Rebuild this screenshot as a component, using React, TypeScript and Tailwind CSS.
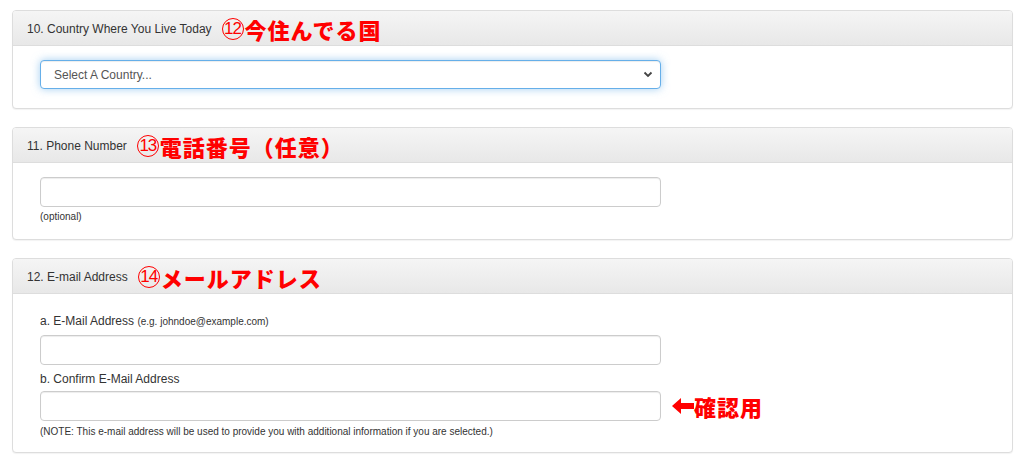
import React from "react";

const sans = "font-['Helvetica_Neue','Liberation_Sans',Arial,sans-serif]";
const jp = "font-['Noto_Sans_CJK_JP',sans-serif]";

function Circled({ n }: { n: string }) {
  return (
    <span className="inline-flex h-[22px] w-[22px] items-center justify-center rounded-full border border-[#ff0000] font-['Liberation_Sans_Narrow','Liberation_Sans',sans-serif] text-[17px] leading-none tracking-[-1px] text-[#ff0000]">
      {n}
    </span>
  );
}

function Panel({
  title,
  num,
  note,
  children,
}: {
  title: string;
  num: string;
  note: string;
  children: React.ReactNode;
}) {
  return (
    <div className="mx-[12px] mr-[11px] rounded-[4px] border border-[#dddddd] bg-white shadow-[0_1px_1px_rgba(0,0,0,0.05)] overflow-hidden">
      <div className="flex h-[35px] items-center border-b border-[#dddddd] bg-gradient-to-b from-[#f5f5f5] to-[#e8e8e8] px-[14px] pt-[1px]">
        <span className="text-[12px] text-[#333333]">{title}</span>
        <span className="ml-[10px] flex items-center">
          <Circled n={num} />
          <span className={`${jp} ml-[1px] text-[22px] font-black leading-none tracking-[1px] text-[#ff0000]`}>
            {note}
          </span>
        </span>
      </div>
      {children}
    </div>
  );
}

function TextInput() {
  return (
    <div className="h-[30px] w-[621px] rounded-[4px] border border-[#cccccc] bg-white shadow-[inset_0_1px_1px_rgba(0,0,0,0.075)]" />
  );
}

export default function App() {
  return (
    <div className={`${sans} h-[463px] w-[1024px] overflow-hidden bg-white pt-[10px] text-[#333333]`}>
      <Panel title="10. Country Where You Live Today" num="12" note="今住んでる国">
        <div className="px-[27px] pt-[14px] pb-[19px]">
          <div className="flex h-[29px] w-[621px] items-center justify-between rounded-[4px] border border-[#66afe9] bg-white pl-[13px] pr-[7px] text-[12px] text-[#555555] shadow-[inset_0_1px_1px_rgba(0,0,0,0.075),0_0_8px_rgba(102,175,233,0.6)]">
            <span>Select A Country...</span>
            <svg width="10" height="7" viewBox="0 0 10 7">
              <path d="M1.5 1.5 L5 5 L8.5 1.5" fill="none" stroke="#444" strokeWidth="1.8" />
            </svg>
          </div>
        </div>
      </Panel>

      <div className="h-[18px]" />

      <Panel title="11. Phone Number" num="13" note="電話番号（任意）">
        <div className="px-[27px] pt-[14px] pb-[15px]">
          <TextInput />
          <div className="mt-[3px] text-[10px] leading-[14px] text-[#333333]">(optional)</div>
        </div>
      </Panel>

      <div className="h-[18px]" />

      <Panel title="12. E-mail Address" num="14" note="メールアドレス">
        <div className="px-[27px] pt-[19px] pb-[13px]">
          <div className="mb-[5px] text-[12px] leading-[16px]">
            a. E-Mail Address <span className="text-[10px]">(e.g. johndoe@example.com)</span>
          </div>
          <TextInput />
          <div className="mt-[6px] mb-[4px] text-[12px] leading-[16px]">b. Confirm E-Mail Address</div>
          <div className="flex items-center">
            <TextInput />
            <div className="ml-[11px] flex items-center">
              <svg width="22" height="16" viewBox="0 0 22 16">
                <path d="M0 8 L9 0 L9 5 L22 5 L22 11 L9 11 L9 16 Z" fill="#ff0000" />
              </svg>
              <span className={`${jp} text-[22px] font-black leading-none tracking-[1px] text-[#ff0000]`}>確認用</span>
            </div>
          </div>
          <div className="mt-[4px] text-[10px] leading-[14px]">
            (NOTE: This e-mail address will be used to provide you with additional information if you are selected.)
          </div>
        </div>
      </Panel>
    </div>
  );
}
